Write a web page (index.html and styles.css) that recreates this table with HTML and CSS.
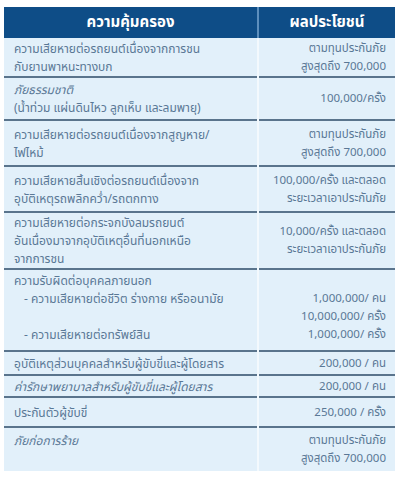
FILE: index.html
```html
<!DOCTYPE html>
<html lang="th">
<head>
<meta charset="utf-8">
<link rel="stylesheet" href="styles.css">
</head>
<body>
<div class="page">
  <table class="cov">
    <thead>
      <tr class="head">
        <th class="c-left">ความคุ้มครอง</th>
        <th class="c-right">ผลประโยชน์</th>
      </tr>
    </thead>
    <tbody>
      <tr class="r1">
        <td class="c-left">ความเสียหายต่อรถยนต์เนื่องจากการชน<br>กับยานพาหนะทางบก</td>
        <td class="c-right">ตามทุนประกันภัย<br>สูงสุดถึง 700,000</td>
      </tr>
      <tr class="r2">
        <td class="c-left"><i>ภัยธรรมชาติ</i><br>(น้ำท่วม แผ่นดินไหว ลูกเห็บ และลมพายุ)</td>
        <td class="c-right">100,000/ครั้ง</td>
      </tr>
      <tr class="r3">
        <td class="c-left">ความเสียหายต่อรถยนต์เนื่องจากสูญหาย/<br>ไฟไหม้</td>
        <td class="c-right">ตามทุนประกันภัย<br>สูงสุดถึง 700,000</td>
      </tr>
      <tr class="r4">
        <td class="c-left">ความเสียหายสิ้นเชิงต่อรถยนต์เนื่องจาก<br>อุบัติเหตุรถพลิกคว่ำ/รถตกทาง</td>
        <td class="c-right">100,000/ครั้ง และตลอด<br>ระยะเวลาเอาประกันภัย</td>
      </tr>
      <tr class="r5">
        <td class="c-left">ความเสียหายต่อกระจกบังลมรถยนต์<br>อันเนื่องมาจากอุบัติเหตุอื่นที่นอกเหนือ<br>จากการชน</td>
        <td class="c-right">10,000/ครั้ง และตลอด<br>ระยะเวลาเอาประกันภัย</td>
      </tr>
      <tr class="r6">
        <td class="c-left top">ความรับผิดต่อบุคคลภายนอก<br><span class="ind">- ความเสียหายต่อชีวิต ร่างกาย หรืออนามัย</span><br>&nbsp;<br><span class="ind">- ความเสียหายต่อทรัพย์สิน</span></td>
        <td class="c-right top skip">1,000,000/ คน<br>10,000,000/ ครั้ง<br>1,000,000/ ครั้ง</td>
      </tr>
      <tr class="r7">
        <td class="c-left">อุบัติเหตุส่วนบุคคลสำหรับผู้ขับขี่และผู้โดยสาร</td>
        <td class="c-right">200,000 / คน</td>
      </tr>
      <tr class="r8">
        <td class="c-left"><i>ค่ารักษาพยาบาลสำหรับผู้ขับขี่และผู้โดยสาร</i></td>
        <td class="c-right">200,000 / คน</td>
      </tr>
      <tr class="r9">
        <td class="c-left">ประกันตัวผู้ขับขี่</td>
        <td class="c-right">250,000 / ครั้ง</td>
      </tr>
      <tr class="r10">
        <td class="c-left top"><i>ภัยก่อการร้าย</i></td>
        <td class="c-right">ตามทุนประกันภัย<br>สูงสุดถึง 700,000</td>
      </tr>
    </tbody>
  </table>
</div>
</body>
</html>
```

FILE: styles.css
```css
html, body {
  margin: 0;
  padding: 0;
  background: #ffffff;
}
.page {
  width: 400px;
  height: 480px;
  padding: 7px 0 0 4px;
  box-sizing: border-box;
  font-family: "Noto Sans Thai", "Noto Sans", "DejaVu Sans", sans-serif;
}
.cov {
  width: 391px;
  border-collapse: collapse;
  table-layout: fixed;
  background: #e2f0fa;
}
.cov th {
  background: #0e4d87;
  color: #ffffff;
  font-size: 15px;
  font-weight: 700;
  height: 31px;
  padding: 0;
  text-align: center;
}
.cov th.c-left {
  width: 253px;
  border-right: 2px solid #5d8fbd;
}
.cov td {
  color: #5a7896;
  font-size: 12px;
  line-height: 18px;
  vertical-align: middle;
  padding: 1px 9px 0 10px;
  border-top: 2px solid #5a748c;
}
.cov tr.r1 td { border-top: none; }
.cov td.c-left {
  text-align: left;
  border-right: 2px solid #f3f9fd;
}
.cov td.c-right {
  text-align: right;
  font-size: 11.5px;
  white-space: nowrap;
  padding-left: 4px;
}
.cov td.top {
  vertical-align: top;
  padding-top: 2px;
}
.cov td.skip {
  padding-top: 20px;
}
.cov i {
  font-style: italic;
}
.ind {
  padding-left: 10px;
}
.r1 { height: 39px; }
.r2 { height: 43px; }
.r3 { height: 46px; }
.r4 { height: 46px; }
.r5 { height: 56px; }
.r6 { height: 82px; }
.r7 { height: 24px; }
.r8 { height: 22px; }
.r9 { height: 30px; }
.r10 { height: 44px; }
.cov tr.r10 td { vertical-align: top; padding-top: 4px; }
```
